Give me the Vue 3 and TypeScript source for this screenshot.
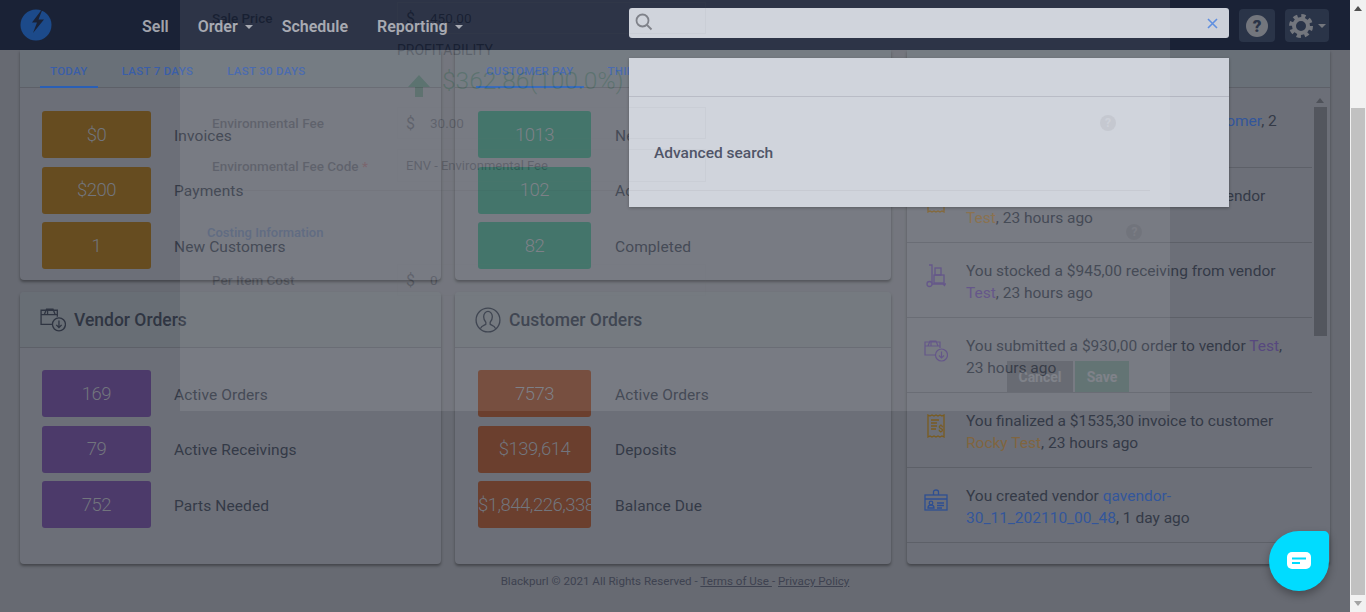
<script setup lang="ts">
const vendorStats = [
  { value: "169", label: "Active Orders" },
  { value: "79", label: "Active Receivings" },
  { value: "752", label: "Parts Needed" },
];
const customerStats = [
  { value: "7573", label: "Active Orders" },
  { value: "$139,614", label: "Deposits" },
  { value: "$1,844,226,338", label: "Balance Due" },
];
const todayStats = [
  { value: "$0", label: "Invoices" },
  { value: "$200", label: "Payments" },
  { value: "1", label: "New Customers" },
];
const payStats = [
  { value: "1013", label: "New" },
  { value: "102", label: "Active" },
  { value: "82", label: "Completed" },
];
</script>

<template>
  <div class="root">
    <div class="main">
      <header class="topbar">
        <svg class="logo" width="32" height="32" viewBox="0 0 32 32">
          <circle cx="16" cy="16" r="15.500" fill="#1c4a8a" />
          <polygon fill="#1a2236" points="23,-1 12,13.500 17,13.500 13,24 24,10.500 18.500,10.500" />
        </svg>
        <nav class="nav">
          <span>Sell</span>
          <span>Order<i class="caret"></i></span>
          <span>Schedule</span>
          <span>Reporting<i class="caret"></i></span>
        </nav>
        <div class="top-actions">
          <button class="icon-btn help-btn">
            <svg width="24" height="24" viewBox="0 0 24 24">
              <circle cx="12" cy="12" r="11" fill="#73767d" />
              <text x="12" y="18" text-anchor="middle" font-family="Roboto, sans-serif" font-weight="900" font-size="17" fill="#2a3448">?</text>
            </svg>
          </button>
          <button class="icon-btn gear-btn">
            <svg width="24" height="24" viewBox="0 0 24 24">
              <circle cx="12" cy="12" r="7" fill="none" stroke="#73767d" stroke-width="4" />
              <circle cx="12" cy="12" r="10" fill="none" stroke="#73767d" stroke-width="4" stroke-dasharray="4.2 3.65" />
            </svg>
            <i class="caret dim"></i>
          </button>
        </div>
      </header>

      <div class="board">
        <section class="card today">
          <div class="tabs">
            <span class="tab active">TODAY</span>
            <span class="tab">LAST 7 DAYS</span>
            <span class="tab">LAST 30 DAYS</span>
          </div>
          <div class="stats">
            <div v-for="s in todayStats" :key="s.label" class="stat">
              <div class="box amber">{{ s.value }}</div>
              <span>{{ s.label }}</span>
            </div>
          </div>
        </section>

        <section class="card pay">
          <div class="tabs">
            <span class="tab active">CUSTOMER PAY</span>
            <span class="tab">THIRD PARTY</span>
          </div>
          <div class="stats">
            <div v-for="s in payStats" :key="s.label" class="stat">
              <div class="box green">{{ s.value }}</div>
              <span>{{ s.label }}</span>
            </div>
          </div>
        </section>

        <section class="card feed">
          <div class="feed-head"></div>
          <div class="feed-body">
            <ul class="feed-list">
              <li>
                <span class="feed-icon"></span>
                <p>You created customer qa tester1 <a class="blue">Customer</a>, 2 days ago</p>
              </li>
              <li>
                <svg class="feed-icon" viewBox="0 0 24 24" fill="none" stroke="#7a5c28" stroke-width="1.300">
                  <path d="M4 1l2 1 2-1 2 1 2-1 2 1 2-1 2 1 2-1v22l-2-1-2 1-2-1-2 1-2-1-2 1-2-1-2 1z" />
                </svg>
                <p>You finalized a $945,00 invoice from vendor <a class="amber-link">Test</a>, 23 hours ago</p>
              </li>
              <li>
                <svg class="feed-icon" viewBox="0 0 24 24" fill="none" stroke="#57487f" stroke-width="1.300">
                  <path d="M5 1h3v18M8 20h14M19 20l2 2" />
                  <circle cx="5.500" cy="20" r="2.500" />
                  <rect x="10" y="11" width="10" height="8" />
                  <rect x="11" y="4" width="6" height="7" />
                </svg>
                <p>You stocked a $945,00 receiving from vendor <a class="purple">Test</a>, 23 hours ago</p>
              </li>
              <li>
                <svg class="feed-icon" viewBox="0 0 24 24" fill="none" stroke="#57487f" stroke-width="1.200">
                  <path d="M11 16H1V3h15v6M1 7h15M4 7l2-5h6l2 5M7 2v5" />
                  <circle cx="17.500" cy="16" r="6" />
                  <path d="M17.500 12.500v6.500M15 16.500l2.500 2.500 2.500-2.500" />
                </svg>
                <p>You submitted a $930,00 order to vendor <a class="purple">Test</a>, 23 hours ago</p>
              </li>
              <li>
                <svg class="feed-icon" viewBox="0 0 24 24" fill="none" stroke="#7a5c20" stroke-width="1.300">
                  <path d="M4 1l2 1 2-1 2 1 2-1 2 1 2-1 2 1 2-1v22l-2-1-2 1-2-1-2 1-2-1-2 1-2-1-2 1zM7 6h8M7 9h6M7 12h6M7 15h5" />
                  <text x="17" y="18" text-anchor="middle" font-family="Roboto, sans-serif" font-size="9" font-weight="700" fill="#7a5c20" stroke="none">$</text>
                </svg>
                <p>You finalized a $1535,30 invoice to customer <a class="amber-link">Rocky Test</a>, 23 hours ago</p>
              </li>
              <li>
                <svg class="feed-icon" viewBox="0 0 24 24" fill="none" stroke="#2e4f92" stroke-width="1.300">
                  <rect x="1" y="6" width="22" height="15" />
                  <path d="M1 10h22M9.500 6V3a2.500 2 0 0 1 5 0v3" />
                  <circle cx="7" cy="14" r="1.800" />
                  <path d="M4 19c0-4 6-4 6 0zM13 14h7M13 16.500h7M13 19h5" />
                </svg>
                <p>You created vendor <a class="blue">qavendor-30_11_202110_00_48</a>, 1 day ago</p>
              </li>
            </ul>
            <div class="mini-scroll">
              <i class="arrow-up"></i>
              <div class="mini-thumb"></div>
            </div>
          </div>
        </section>

        <section class="card vendor">
          <h2 class="card-head">
            <svg width="26" height="26" viewBox="0 0 24 24" fill="none" stroke="#2f3542" stroke-width="1.200">
              <path d="M11 16H1V3h15v6M1 7h15M4 7l2-5h6l2 5M7 2v5" />
              <circle cx="17.500" cy="16" r="6" />
              <path d="M17.500 12.500v6.500M15 16.500l2.500 2.500 2.500-2.500" />
            </svg>
            Vendor Orders
          </h2>
          <div class="stats lower">
            <div v-for="s in vendorStats" :key="s.label" class="stat">
              <div class="box violet">{{ s.value }}</div>
              <span>{{ s.label }}</span>
            </div>
          </div>
        </section>

        <section class="card customer">
          <h2 class="card-head">
            <svg width="26" height="26" viewBox="0 0 24 24" fill="none" stroke="#2f3542" stroke-width="1.200">
              <circle cx="12" cy="12" r="11" />
              <path d="M5 20c1-3 4-3 5-4v-2c-1-1-2-3-2-5 0-3 2-5 4-5s4 2 4 5c0 2-1 4-2 5v2c1 1 4 1 5 4" />
            </svg>
            Customer Orders
          </h2>
          <div class="stats lower">
            <div v-for="s in customerStats" :key="s.label" class="stat">
              <div class="box rust">{{ s.value }}</div>
              <span>{{ s.label }}</span>
            </div>
          </div>
        </section>
      </div>

      <footer class="legal">
        Blackpurl © 2021 All Rights Reserved - <a>Terms of Use </a> - <a>Privacy Policy</a>
      </footer>

      <div class="search">
        <div class="search-bar">
          <svg width="18" height="18" viewBox="0 0 18 18" fill="none" stroke="#74777f" stroke-width="1.800">
            <circle cx="7.500" cy="7.500" r="6" />
            <path d="M12 12l4.500 4.500" />
          </svg>
          <svg class="clear" width="11" height="11" viewBox="0 0 11 11" fill="none" stroke="#5f8fe0" stroke-width="1.600">
            <path d="M1 1l9 9M10 1l-9 9" />
          </svg>
        </div>
        <div class="search-panel">
          <div class="panel-top"></div>
          <div class="panel-row">Advanced search</div>
        </div>
      </div>

      <div class="modal">
        <div class="form-row first">
          <label>Sale Price</label>
          <div class="input"><b>$</b>450.00</div>
        </div>
        <div class="profit">
          <div class="profit-title">PROFITABILITY</div>
          <div class="profit-value">
            <svg width="22" height="24" viewBox="0 0 22 24"><path fill="#0b8a40" d="M11 1l11 12h-7v10H7V13H0z" /></svg>
            $362.86(100.0%)
          </div>
        </div>
        <div class="form-row">
          <label>Environmental Fee</label>
          <div class="input"><b>$</b>30.00</div>
          <i class="ghost-help one">?</i>
        </div>
        <div class="form-row tight">
          <label>Environmental Fee Code <em>*</em></label>
          <div class="input plain">ENV - Environmental Fee</div>
        </div>
        <hr />
        <div class="costing">
          <span>Costing Information</span>
          <i class="ghost-help two">?</i>
        </div>
        <div class="form-row cost">
          <label>Per Item Cost</label>
          <div class="input"><b>$</b>0</div>
        </div>
        <div class="modal-actions">
          <button class="cancel">Cancel</button>
          <button class="save">Save</button>
        </div>
      </div>

      <div class="chat">
        <svg width="24" height="18" viewBox="0 0 24 18">
          <rect width="24" height="17" rx="5" fill="#fff" />
          <path d="M5 6.500h14M5 11h8" stroke="#00dcff" stroke-width="2" />
        </svg>
      </div>
    </div>

    <aside class="page-scroll">
      <i class="arrow-up"></i>
      <div class="page-thumb"></div>
      <i class="arrow-down"></i>
    </aside>
  </div>
</template>

<style>
html,
body {
  margin: 0;
  overflow: hidden;
}
</style>

<style scoped>
.root {
  display: flex;
  height: 612px;
  overflow: hidden;
  font-family: Roboto, "Liberation Sans", sans-serif;
  color: #343a47;
}
.main {
  flex: 1;
  position: relative;
  background: #676a72;
  min-width: 0;
}

.topbar {
  height: 50px;
  background: #1a2236;
  display: flex;
  align-items: center;
  padding: 0 21px 0 20px;
}
.logo {
  flex: none;
  overflow: hidden;
}
.nav {
  display: flex;
  gap: 29px;
  margin: 2px 0 0 90px;
  font-size: 16px;
  font-weight: 600;
  color: #a0a3ab;
}
.caret {
  display: inline-block;
  width: 0;
  height: 0;
  margin-left: 7px;
  vertical-align: 3px;
  border: 4px solid transparent;
  border-top: 4px solid #a0a3ab;
  border-bottom: 0;
}
.caret.dim {
  border-top-color: #73767d;
  margin-left: 5px;
}
.top-actions {
  margin-left: auto;
  display: flex;
  gap: 10px;
  margin-top: 1px;
}
.icon-btn {
  height: 33px;
  border: 0;
  padding: 0;
  border-radius: 4px;
  background: #2a3448;
  display: flex;
  align-items: center;
  justify-content: center;
}
.help-btn {
  width: 36px;
}
.gear-btn {
  width: 44px;
}

.board {
  display: grid;
  grid-template-columns: 421px 436px 423px;
  grid-template-rows: 230px 272px;
  column-gap: 14px;
  row-gap: 12px;
  padding: 0 20px;
}
.board .feed {
  grid-column: 3;
  grid-row: 1 / span 2;
  margin-left: 2px;
  width: 423px;
}
.card {
  background: #6c6f78;
  border-radius: 0 0 4px 4px;
  box-shadow: 0 2px 3px rgba(0, 0, 0, 0.35);
  display: flex;
  flex-direction: column;
}
.vendor,
.customer {
  border-radius: 4px;
}
.tabs {
  height: 38px;
  display: flex;
  gap: 14px;
  padding-left: 20px;
  border-bottom: 1px solid #5d6068;
  background: #697078;
  box-sizing: border-box;
}
.pay .tabs {
  padding-left: 21px;
}
.tab {
  font-size: 11.500px;
  font-weight: 500;
  letter-spacing: 0.3px;
  color: #3a5ea8;
  padding: 14px 10px 0;
  box-sizing: border-box;
  height: 38px;
}
.tab.active {
  border-bottom: 2px solid #2a5fb5;
}
.stats {
  padding: 23px 22px 0;
  display: flex;
  flex-direction: column;
  gap: 8.500px;
}
.stats.lower {
  padding-top: 22px;
}
.pay .stats,
.customer .stats {
  padding-left: 23px;
}
.stat {
  display: flex;
  align-items: center;
  gap: 23px;
  font-size: 15.500px;
  letter-spacing: 0.1px;
}
.pay .stat,
.customer .stat {
  gap: 24px;
}
.stat span {
  padding-top: 2px;
}
.box {
  flex: none;
  width: 109px;
  height: 47px;
  border-radius: 3px;
  display: flex;
  align-items: center;
  justify-content: safe center;
  overflow: hidden;
  white-space: nowrap;
  font-size: 18.500px;
  font-weight: 300;
  letter-spacing: -0.5px;
  color: #72757d;
}
.pay .box,
.customer .box {
  width: 113px;
}
.amber {
  background: #664c20;
}
.green {
  background: #33695e;
}
.violet {
  background: #4c3a6a;
}
.rust {
  background: #6b3f2e;
}
.card-head {
  margin: 0;
  height: 56px;
  box-sizing: border-box;
  display: flex;
  align-items: center;
  gap: 8px;
  padding-left: 20px;
  border-bottom: 1px solid #5d6068;
  background: #686e75;
  font-size: 17.500px;
  font-weight: 500;
  color: #2f3542;
  border-radius: 4px 4px 0 0;
}

.feed-head {
  height: 38px;
  background: #697078;
  border-bottom: 1px solid #5d6068;
  flex: none;
  box-sizing: border-box;
}
.feed-body {
  flex: 1;
  display: flex;
  min-height: 0;
}
.feed-list {
  list-style: none;
  margin: 0;
  padding: 5px 0 0;
  flex: 1;
}
.feed-list li {
  height: 75px;
  box-sizing: border-box;
  border-bottom: 1px solid #5d6068;
  display: flex;
  gap: 18px;
  padding: 17px 16px 0 17px;
}
.feed-icon {
  flex: none;
  width: 24px;
  height: 24px;
  margin-top: 4px;
}
.feed-list p {
  margin: 0;
  font-size: 15.500px;
  line-height: 22px;
}
.blue {
  color: #33569b;
}
.amber-link {
  color: #80653f;
}
.purple {
  color: #57487f;
}
.mini-scroll {
  width: 16px;
  flex: none;
  margin: 6px 2px 0 0;
  display: flex;
  flex-direction: column;
  align-items: center;
  padding-top: 4px;
  box-sizing: border-box;
}
.mini-thumb {
  width: 13px;
  height: 229px;
  margin-top: 4px;
  background: #53565e;
}
.arrow-up,
.arrow-down {
  width: 0;
  height: 0;
  border: 4px solid transparent;
  flex: none;
}
.arrow-up {
  border-top: 0;
  border-bottom: 5px solid #505050;
}
.mini-scroll .arrow-up {
  border-bottom-color: #4e5159;
}
.arrow-down {
  border-bottom: 0;
  border-top: 5px solid #a3a3a3;
}

.legal {
  margin-top: 10px;
  text-align: center;
  font-size: 11.600px;
  line-height: 14px;
  color: #3e4250;
}
.legal a {
  text-decoration: underline;
}

.search {
  position: absolute;
  left: 629px;
  top: 8px;
  width: 600px;
}
.search-bar {
  height: 30px;
  background: #ccd0d9;
  border-radius: 3px;
  display: flex;
  align-items: center;
  justify-content: space-between;
  padding: 0 11px 2px 6px;
  box-sizing: border-box;
}
.clear {
  margin-top: 3px;
}
.search-panel {
  margin-top: 20px;
  height: 149px;
  background: #ccd0d9;
  box-shadow: 0 1px 3px rgba(0, 0, 0, 0.3);
}
.panel-top {
  height: 38px;
  border-bottom: 1px solid #b3b6c1;
}
.panel-row {
  padding: 47px 0 0 25px;
  font-size: 15.500px;
  font-weight: 500;
  color: #40465a;
}

.modal {
  position: absolute;
  left: 180px;
  top: 0;
  width: 990px;
  height: 411px;
  box-sizing: border-box;
  background: rgba(255, 255, 255, 0.65);
  opacity: 0.13;
  padding: 2px 0 0 32px;
  color: #10131f;
  font-size: 13.500px;
  pointer-events: none;
}
.form-row {
  display: flex;
  align-items: center;
  height: 32px;
}
.form-row label {
  width: 185px;
  flex: none;
  font-weight: 500;
}
.form-row em {
  color: #d33;
  font-style: normal;
}
.input {
  width: 309px;
  height: 100%;
  box-sizing: border-box;
  border: 1px solid #c4c4c4;
  padding-left: 8px;
  display: flex;
  align-items: center;
  gap: 15px;
}
.input b {
  font-weight: 400;
  font-size: 16px;
}
.input.plain {
  font-size: 13px;
}
.profit {
  height: 73px;
  margin-left: 185px;
  padding-top: 7px;
  box-sizing: border-box;
}
.profit-title {
  font-size: 14px;
  line-height: 18px;
}
.profit-value {
  display: flex;
  align-items: center;
  gap: 12px;
  margin: 3px 0 0 11px;
  font-size: 24.500px;
  font-weight: 300;
  color: #0b8a40;
}
.profit-value svg {
  margin-top: 12px;
}
.form-row.tight {
  margin-top: 10px;
  height: 33px;
}
.ghost-help {
  display: flex;
  align-items: center;
  justify-content: center;
  width: 16px;
  height: 16px;
  border-radius: 50%;
  background: #999;
  color: #ddd;
  font-style: normal;
  font-size: 12px;
  font-weight: 700;
}
.ghost-help.one {
  margin-left: 394px;
}
.ghost-help.two {
  margin-left: 803px;
}
.modal hr {
  margin: 8px 0 0 -32px;
  width: 970px;
  border: 0;
  border-top: 1px solid #aaa;
}
.costing {
  display: flex;
  align-items: center;
  margin: 33px 0 0 -5px;
  height: 16px;
  font-weight: 600;
  font-size: 13px;
  color: #1a5fc9;
}
.form-row.cost {
  margin-top: 24px;
}
.modal-actions {
  display: flex;
  gap: 2px;
  margin: 65px 0 0 795px;
}
.modal-actions button {
  height: 31px;
  border: 0;
  color: #fff;
  font: 700 14px Roboto, sans-serif;
}
.cancel {
  width: 66px;
  background: #555;
}
.save {
  width: 54px;
  background: #2a9a60;
}

.chat {
  position: absolute;
  left: 1269px;
  top: 531px;
  width: 60px;
  height: 60px;
  background: #00dcff;
  border-radius: 30px 5px 30px 30px;
  box-shadow: 0 4px 8px rgba(0, 0, 0, 0.3);
  display: flex;
  align-items: center;
  justify-content: center;
}

.page-scroll {
  width: 16px;
  flex: none;
  background: #f1f1f1;
  display: flex;
  flex-direction: column;
  align-items: center;
  padding-top: 6px;
  box-sizing: border-box;
}
.page-thumb {
  width: 14px;
  height: 487px;
  margin-top: 97px;
  background: #c1c1c1;
}
.page-scroll .arrow-down {
  margin-top: 6px;
}
</style>
